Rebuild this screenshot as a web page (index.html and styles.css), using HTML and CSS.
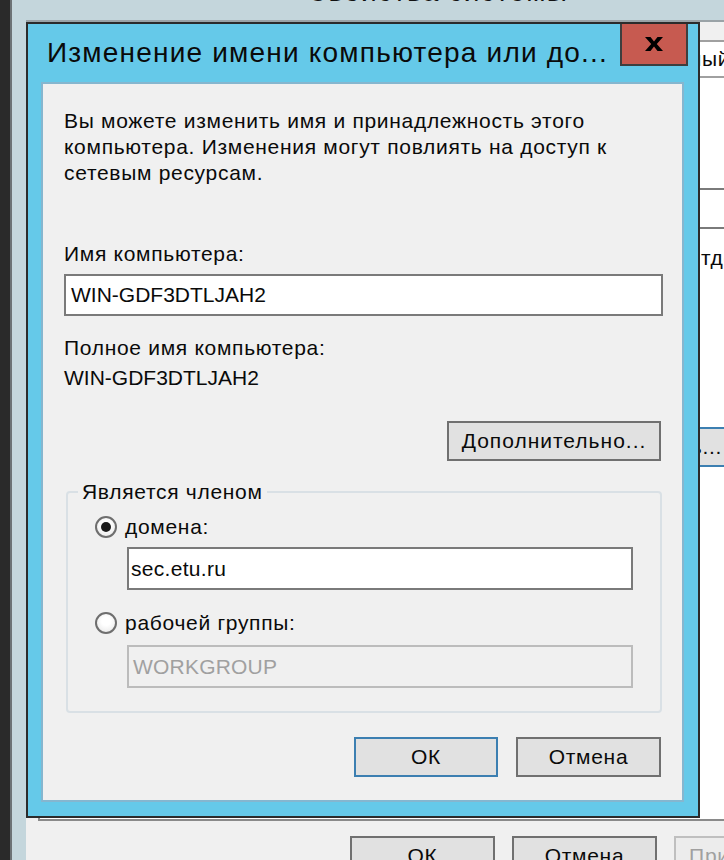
FILE: index.html
```html
<!DOCTYPE html>
<html lang="ru">
<head>
<meta charset="utf-8">
<title>Изменение имени компьютера или домена</title>
<link rel="stylesheet" href="styles.css">
</head>
<body>
<div class="desk">
  <div class="edge"></div>
  <div class="parent">
    <div class="ptitle"><span>Свойства системы</span></div>
    <div class="pbody">
      <div class="tabgap"></div>
      <div class="tabs"><span class="pre">Удаленн</span>ый доступ</div>
      <div class="panel">
        <div class="p-desc"></div>
        <div class="p-note"><span class="pre2">О</span>тдел</div>
        <div class="p-btn">Изменить...</div>
      </div>
      <div class="pbtns">
        <div class="btn">ОК</div>
        <div class="btn">Отмена</div>
        <div class="btn disabled">Применить</div>
      </div>
    </div>
  </div>
</div>

<div class="dialog">
  <div class="dtitle">
    <h1>Изменение имени компьютера или до...</h1>
    <div class="close">
      <svg width="20" height="16" viewBox="0 0 20 16"><path d="M1 1h5.5l3.5 4.6 3.5-4.6h5.5l-6.2 7 6.2 7h-5.5l-3.5-4.6-3.5 4.6h-5.5l6.2-7z" fill="#000"/></svg>
    </div>
  </div>
  <div class="dbody">
    <p class="intro">Вы можете изменить имя и принадлежность этого<br>компьютера. Изменения могут повлиять на доступ к<br>сетевым ресурсам.</p>
    <div class="lbl">Имя компьютера:</div>
    <div class="field">WIN-GDF3DTLJAH2</div>
    <div class="lbl2">Полное имя компьютера:</div>
    <div class="full">WIN-GDF3DTLJAH2</div>
    <div class="btn more">Дополнительно...</div>
    <fieldset class="group">
      <legend>Является членом</legend>
      <div class="radio-row first"><span class="radio on"></span><span>домена:</span></div>
      <div class="field dom">sec.etu.ru</div>
      <div class="radio-row second"><span class="radio"></span><span>рабочей группы:</span></div>
      <div class="field wg">WORKGROUP</div>
    </fieldset>
    <div class="actions">
      <div class="btn ok">ОК</div>
      <div class="btn cancel">Отмена</div>
    </div>
  </div>
</div>
</body>
</html>
```

FILE: styles.css
```css
* { box-sizing: border-box; }

body {
  margin: 0;
  width: 724px;
  height: 860px;
  overflow: hidden;
  position: relative;
  background: #f0f0f0;
  font-family: "Liberation Sans", Arial, sans-serif;
  font-size: 21px;
  letter-spacing: 0.7px;
  color: #0a0a0a;
}

.desk { display: flex; height: 860px; }

.edge {
  flex: none;
  width: 12px;
  background: #2a2a2a;
  border-right: 2px solid #6c7275;
}

.parent {
  flex: 1;
  min-width: 0;
  display: flex;
  flex-direction: column;
  background: #c4d6dc;
}

.ptitle {
  flex: none;
  height: 20px;
  overflow: hidden;
  padding-left: 295px;
  font-size: 28px;
  letter-spacing: 1.2px;
  line-height: 28px;
  white-space: nowrap;
  color: #111;
}
.ptitle span { display: block; margin-top: -22px; }

.pbody {
  flex: 1;
  min-width: 0;
  margin-left: 14px;
  background: #f0f0f0;
  border-top: 2px solid #9aa3a7;
  display: flex;
  flex-direction: column;
  overflow: hidden;
}

.tabgap { flex: none; height: 18px; }

.tabs {
  flex: none;
  height: 38px;
  background: #fff;
  border-top: 2px solid #a0a0a0;
  border-bottom: 2px solid #a0a0a0;
  line-height: 34px;
  white-space: nowrap;
}
.tabs .pre { display: inline-block; width: 676px; text-align: right; }

.panel {
  flex: none;
  height: 743px;
  margin-left: 12px;
  background: #fff;
  border-left: 2px solid #8a8a8a;
  border-bottom: 2px solid #8a8a8a;
  display: flex;
  flex-direction: column;
  overflow: hidden;
}

.p-desc {
  flex: none;
  margin-top: 110px;
  margin-left: 560px;
  width: 200px;
  height: 41px;
  border: 2px solid #7a7a7a;
}

.p-note {
  flex: none;
  margin-top: 16px;
  line-height: 26px;
  white-space: nowrap;
}
.p-note .pre2 { display: inline-block; width: 661px; text-align: right; }

.p-btn {
  flex: none;
  margin-top: 156px;
  margin-left: 560px;
  width: 200px;
  height: 40px;
  border: 2px solid #3c7fb1;
  background: #e1e1e1;
  text-align: right;
  padding-right: 76px;
  line-height: 36px;
  white-space: nowrap;
}

.pbtns {
  flex: none;
  display: flex;
  gap: 17px;
  padding-left: 324px;
  margin-top: 15px;
}
.pbtns .btn { width: 145px; flex: none; }

.btn {
  height: 40px;
  border: 2px solid #707070;
  background: #e1e1e1;
  display: flex;
  align-items: center;
  justify-content: center;
  white-space: nowrap;
}
.btn.disabled { border-color: #bfbfbf; color: #a0a0a0; background: #ececec; }

/* dialog */
.dialog {
  position: absolute;
  left: 26px;
  top: 22px;
  width: 674px;
  height: 796px;
  border: 2px solid #2b2b2b;
  background: #65c9e9;
  display: flex;
  flex-direction: column;
}

.dtitle {
  flex: none;
  height: 58px;
  display: flex;
  align-items: flex-start;
}
.dtitle h1 {
  flex: 1;
  margin: 0;
  padding-left: 19px;
  font-size: 28px;
  letter-spacing: 1.2px;
  font-weight: normal;
  line-height: 58px;
  white-space: nowrap;
  color: #0a0a0a;
}

.close {
  flex: none;
  width: 68px;
  height: 42px;
  margin-right: 10px;
  background: #c75a50;
  border: 2px solid #3e3e3e;
  border-top: 0;
  display: flex;
  align-items: center;
  justify-content: center;
}

.dbody {
  flex: 1;
  margin: 0 14px 14px 13px;
  background: #f0f0f0;
  border: 2px solid #85b6cf;
  padding: 24px 21px 0 21px;
  display: flex;
  flex-direction: column;
}

.intro { margin: 0; line-height: 26px; }
.lbl { margin-top: 55px; line-height: 26px; }
.lbl2 { margin-top: 19px; line-height: 26px; }
.full { margin-top: 4px; line-height: 26px; letter-spacing: 0; }

.field {
  flex: none;
  margin-top: 7px;
  width: 599px;
  height: 42px;
  border: 2px solid #7a7a7a;
  background: #fff;
  padding-left: 5px;
  line-height: 38px;
  white-space: nowrap;
  letter-spacing: 0;
}

.more {
  align-self: flex-end;
  margin-top: 30px;
  width: 214px;
  letter-spacing: 1px;
}

.group {
  margin: 18px 0 0 2px;
  padding: 0 0 23px 0;
  width: 596px;
  border: 2px solid #d9e0e5;
  border-radius: 4px;
  min-width: 0;
}
.group legend {
  margin-left: 10px;
  padding: 0 4px;
  line-height: 26px;
}

.radio-row {
  display: flex;
  align-items: center;
  gap: 8px;
  height: 26px;
  margin-left: 27px;
}
.radio-row.first { margin-top: 9px; }
.radio-row.second { margin-top: 20px; }

.radio {
  flex: none;
  width: 22px;
  height: 22px;
  border-radius: 50%;
  border: 2px solid #6e6e6e;
  background: radial-gradient(circle at 50% 40%, #ffffff 30%, #e4e4e4 100%);
  display: flex;
  align-items: center;
  justify-content: center;
}
.radio.on::after {
  content: "";
  width: 10px;
  height: 10px;
  border-radius: 50%;
  background: #1b1b1b;
}

.field.dom {
  margin-left: 59px;
  width: 506px;
  height: 43px;
  padding-left: 2px;
  line-height: 39px;
  letter-spacing: 0.3px;
}
.field.wg {
  margin-top: 9px;
  margin-left: 59px;
  width: 506px;
  height: 43px;
  padding-left: 4px;
  line-height: 39px;
  background: #f0f0f0;
  border-color: #bcbcbc;
  color: #a0a0a0;
  letter-spacing: 0.2px;
}

.actions {
  display: flex;
  justify-content: flex-end;
  gap: 18px;
  margin-top: 24px;
}
.actions .ok { width: 144px; border-color: #3c7fb1; }
.actions .cancel { width: 145px; }
```
